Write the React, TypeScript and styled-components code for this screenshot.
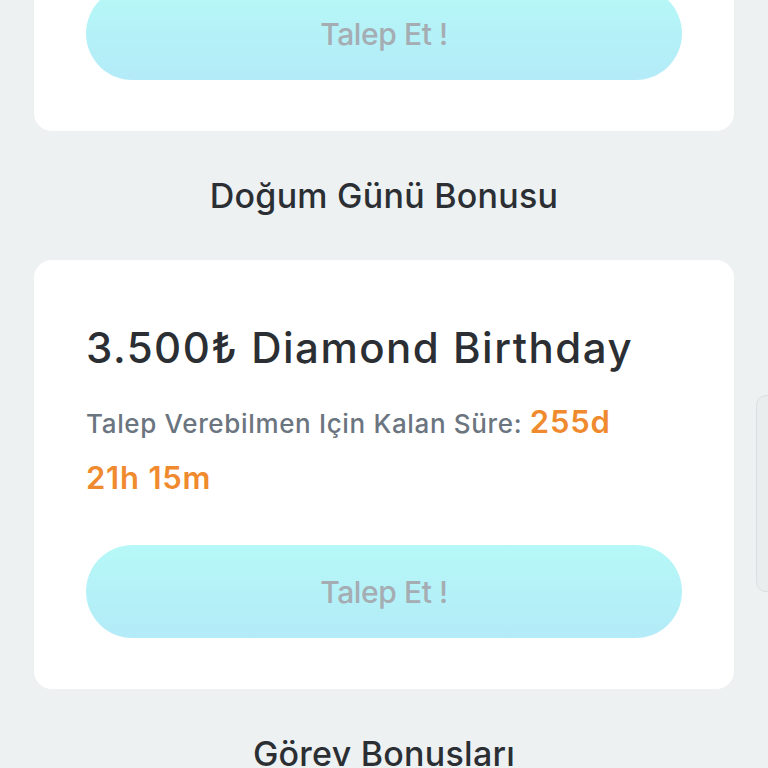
import React from "react";
import styled, { createGlobalStyle } from "styled-components";

const Global = createGlobalStyle`
  html, body { margin: 0; padding: 0; background: #edf1f2; overflow: hidden; }
  body { font-family: "Inter", "Noto Sans", sans-serif; }
`;

const Page = styled.div`
  position: relative;
  width: 768px;
  height: 768px;
  overflow: hidden;
  background: #edf1f2;
`;

const Column = styled.div`
  display: flex;
  flex-direction: column;
  padding: 0 34px;
  margin-top: -63px;
`;

const Card = styled.section<{ $pt: number }>`
  background: #ffffff;
  border-radius: 18px;
  padding: ${(p) => p.$pt}px 52px 51px;
  display: flex;
  flex-direction: column;
`;

const SectionTitle = styled.h2`
  margin: 0;
  height: 129px;
  display: flex;
  align-items: center;
  justify-content: center;
  font-size: 34px;
  font-weight: 500;
  letter-spacing: 0.25px;
  color: #2b2f33;
`;

const BonusTitle = styled.h3`
  margin: 0;
  font-size: 42px;
  line-height: 52px;
  font-weight: 500;
  color: #2b2f33;
  letter-spacing: 1.5px;
`;

const Remaining = styled.p`
  margin: 21px 0 0;
  max-width: 545px;
  font-size: 26px;
  line-height: 54px;
  color: #6b7580;
  font-weight: 500;
  letter-spacing: 0.65px;
`;

const Countdown = styled.span`
  color: #f08a2e;
  font-size: 31px;
  font-weight: 600;
  letter-spacing: 0.8px;
`;

const ClaimButton = styled.button`
  width: 100%;
  height: 93px;
  border: none;
  border-radius: 47px;
  background: linear-gradient(180deg, #b6f8f7 0%, #b3ebf8 100%);
  color: #a5acb2;
  font-family: inherit;
  font-size: 30px;
  font-weight: 500;
  letter-spacing: -0.4px;
  cursor: default;
`;

const ButtonGap = styled.div`
  height: 38px;
`;

const EdgeHandle = styled.div`
  position: absolute;
  left: 756px;
  top: 395px;
  width: 30px;
  height: 195px;
  border-radius: 10px;
  background: #e9edee;
  border: 1px solid #dadfe1;
`;

export default function App() {
  return (
    <Page>
      <Global />
      <Column>
        <Card $pt={50}>
          <ClaimButton>Talep Et !</ClaimButton>
        </Card>
        <SectionTitle>Doğum Günü Bonusu</SectionTitle>
        <Card $pt={62}>
          <BonusTitle>3.500₺ Diamond Birthday</BonusTitle>
          <Remaining>
            Talep Verebilmen Için Kalan Süre: <Countdown>255d 21h 15m</Countdown>
          </Remaining>
          <ButtonGap />
          <ClaimButton>Talep Et !</ClaimButton>
        </Card>
        <SectionTitle>Görev Bonusları</SectionTitle>
      </Column>
      <EdgeHandle />
    </Page>
  );
}
